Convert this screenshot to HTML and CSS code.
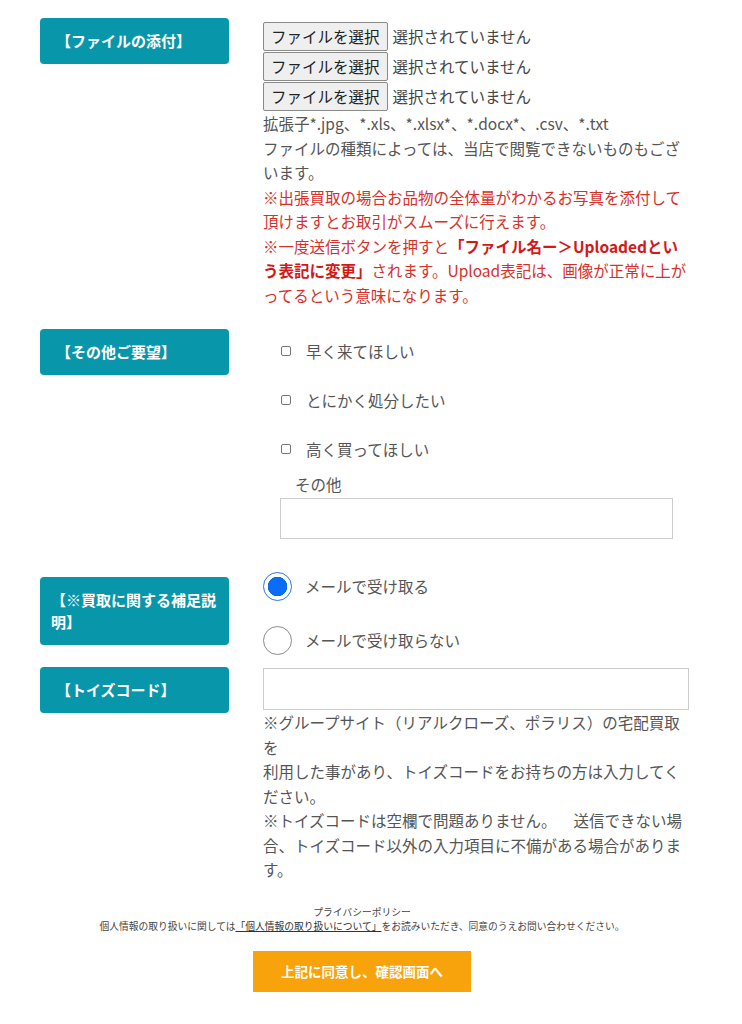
FILE: index.html
```html
<!DOCTYPE html>
<html lang="ja">
<head>
<meta charset="utf-8">
<title>フォーム</title>
<link rel="stylesheet" href="styles.css">
</head>
<body>
<div class="page">
  <div class="row row-file">
    <div class="label">【ファイルの添付】</div>
    <div class="field">
      <div class="file-line"><button class="file-btn" type="button">ファイルを選択</button><span class="file-status">選択されていません</span></div>
      <div class="file-line"><button class="file-btn" type="button">ファイルを選択</button><span class="file-status">選択されていません</span></div>
      <div class="file-line"><button class="file-btn" type="button">ファイルを選択</button><span class="file-status">選択されていません</span></div>
      <p class="note">拡張子*.jpg、*.xls、*.xlsx*、*.docx*、.csv、*.txt<br>ファイルの種類によっては、当店で閲覧できないものもございます。<br><span class="red">※出張買取の場合お品物の全体量がわかるお写真を添付して頂けますとお取引がスムーズに行えます。<br>※一度送信ボタンを押すと<strong>「ファイル名ー＞Uploadedという表記に変更」</strong>されます。Upload表記は、画像が正常に上がってるという意味になります。</span></p>
    </div>
  </div>

  <div class="row row-other">
    <div class="label">【その他ご要望】</div>
    <div class="field checks">
      <label class="check"><input type="checkbox" class="cb"><span>早く来てほしい</span></label>
      <label class="check"><input type="checkbox" class="cb"><span>とにかく処分したい</span></label>
      <label class="check"><input type="checkbox" class="cb"><span>高く買ってほしい</span></label>
      <div class="other-title">その他</div>
      <textarea class="other-box"></textarea>
    </div>
  </div>

  <div class="row row-radio">
    <div class="label label-tall">【※買取に関する補足説明】</div>
    <div class="field radios">
      <label class="radio"><input type="radio" name="mail" class="rb" checked><span>メールで受け取る</span></label>
      <label class="radio"><input type="radio" name="mail" class="rb"><span>メールで受け取らない</span></label>
    </div>
  </div>

  <div class="row row-code">
    <div class="label">【トイズコード】</div>
    <div class="field">
      <input type="text" class="code-input">
      <p class="note">※グループサイト（リアルクローズ、ポラリス）の宅配買取を<br>利用した事があり、トイズコードをお持ちの方は入力してください。<br>※トイズコードは空欄で問題ありません。<span class="gap"></span>送信できない場合、トイズコード以外の入力項目に不備がある場合があります。</p>
    </div>
  </div>

  <div class="privacy">
    <p class="privacy-title">プライバシーポリシー</p>
    <p class="privacy-text">個人情報の取り扱いに関しては<a href="#" class="privacy-link">「個人情報の取り扱いについて」</a>をお読みいただき、同意のうえお問い合わせください。</p>
    <button type="button" class="submit">上記に同意し、確認画面へ</button>
  </div>
</div>
</body>
</html>
```

FILE: styles.css
```css
* { box-sizing: border-box; }
html, body { margin: 0; padding: 0; background: #fff; }
body {
  font-family: "Noto Sans CJK JP", "Noto Sans", sans-serif;
  color: #555;
  font-size: 15.5px;
}
.page {
  width: 724px;
  padding-top: 18px;
}
.row {
  display: grid;
  grid-template-columns: 189px 427px;
  column-gap: 34px;
  padding-left: 40px;
  align-items: start;
}
.label {
  background: #0896aa;
  color: #fff;
  font-weight: bold;
  font-size: 15px;
  line-height: 22px;
  min-height: 44px;
  padding: 12px 8px 12px 16px;
  border-radius: 4px;
  display: flex;
  align-items: center;
}
.label-tall { padding-left: 11px; }
.field { min-width: 0; }
.note {
  margin: 0;
  line-height: 24.5px;
  font-size: 15.5px;
}
.gap {
  display: inline-block;
  width: 17px;
}
.red { color: #d7302a; }
.red strong { color: #d41818; font-weight: bold; }

/* file */
.row-file .field { padding-top: 3px; }
.file-line {
  display: flex;
  align-items: center;
  height: 30px;
}
.file-btn {
  height: 29px;
  padding: 0 7px;
  font-family: inherit;
  font-size: 15.5px;
  color: #222;
  background: #efefef;
  border: 1px solid #8a8a8a;
  border-radius: 2px;
  line-height: 27px;
}
.file-status {
  margin-left: 5px;
  color: #444;
}

/* checks */
.row-other { margin-top: 22px; }
.checks {
  padding-top: 10px;
  padding-left: 17px;
  display: flex;
  flex-direction: column;
  align-items: flex-start;
}
.check {
  display: flex;
  align-items: center;
  height: 24px;
  margin-bottom: 25px;
}
.check:nth-of-type(3) { margin-bottom: 11px; }
.cb {
  appearance: none;
  width: 10px;
  height: 10px;
  margin: 0 15px 0 1px;
  border: 1px solid #777;
  border-radius: 2px;
  background: #fff;
}
.other-title {
  line-height: 24px;
  padding-left: 15px;
  margin-bottom: 2px;
}
.other-box {
  width: 393px;
  height: 41px;
  border: 1px solid #ccc;
  border-radius: 0;
  resize: none;
  display: block;
  margin: 0;
}

/* radios */
.row-radio { margin-top: 32px; }
.row-radio .label { margin-top: 6px; }
.radios {
  display: flex;
  flex-direction: column;
  gap: 24px;
}
.radio {
  display: flex;
  align-items: center;
  height: 30px;
}
.rb {
  appearance: none;
  width: 29px;
  height: 29px;
  margin: 0 13px 0 0;
  border-radius: 50%;
  border: 1px solid #8c8c8c;
  background: #fff;
}
.rb:checked {
  border: 1px solid #2d74e0;
  background: radial-gradient(circle, #0b6cf5 0 9.5px, #fff 10px);
}

/* code */
.row-code { margin-top: 12px; }
.row-code .field { padding-top: 1px; }
.code-input {
  display: block;
  width: 426px;
  height: 42px;
  border: 1px solid #ccc;
  margin: 0;
}

/* privacy */
.privacy {
  margin-top: 23px;
  text-align: center;
}
.privacy p {
  margin: 0;
  font-size: 9.75px;
  line-height: 14px;
  color: #444;
}
.privacy-link {
  color: #333;
  text-decoration: underline;
}
.submit {
  margin-top: 18px;
  width: 218px;
  height: 41px;
  border: none;
  background: #f9a30c;
  color: #fff;
  font-family: inherit;
  font-weight: bold;
  font-size: 13.5px;
}
```
